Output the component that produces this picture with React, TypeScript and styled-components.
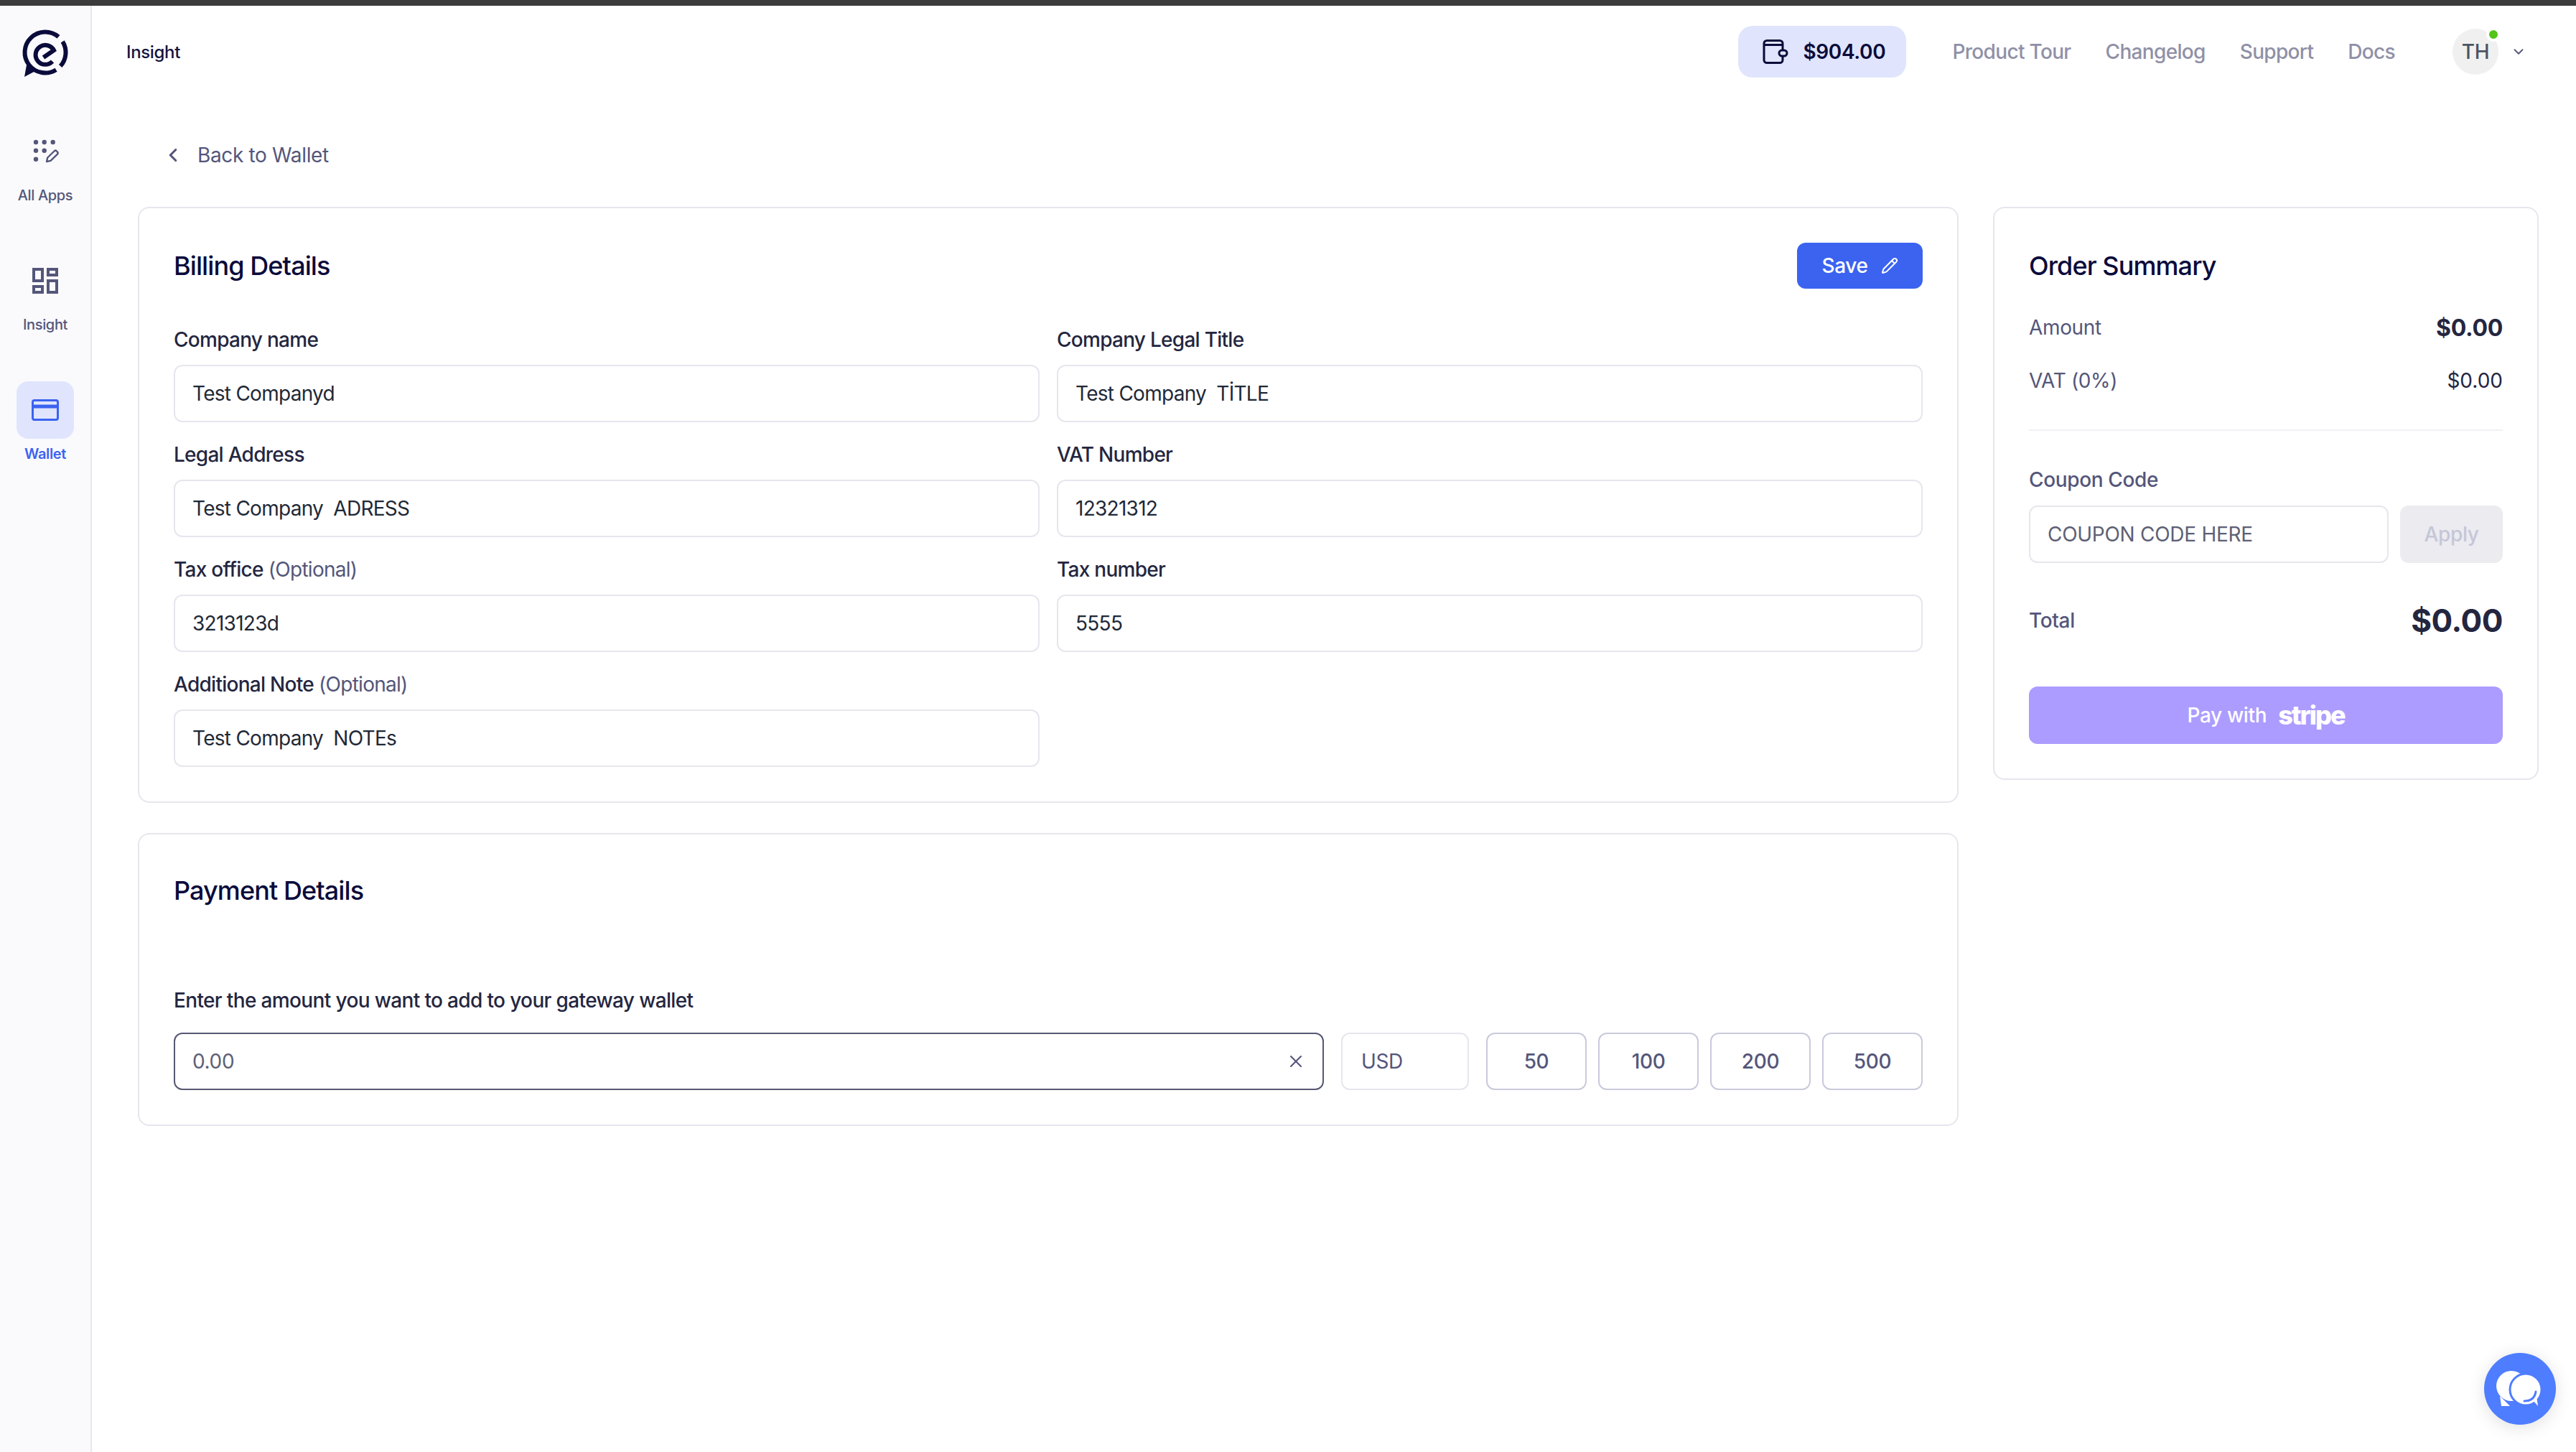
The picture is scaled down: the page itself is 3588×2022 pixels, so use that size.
import styled, { createGlobalStyle } from "styled-components";
import { ChevronDown, ChevronLeft, Pencil, X } from "lucide-react";

const GlobalStyle = createGlobalStyle`
  * {
    box-sizing: border-box;
  }
  html, body {
    margin: 0;
    padding: 0;
    background: #ffffff;
    font-family: "Inter", "Liberation Sans", sans-serif;
    letter-spacing: -0.022em;
    overflow: hidden;
  }
  input, button {
    font-family: inherit;
    letter-spacing: inherit;
  }
`;

const Page = styled.div`
  height: 100vh;
  display: flex;
  flex-direction: column;
  position: relative;
`;

const TopStrip = styled.div`
  height: 8px;
  flex: none;
  background: #3c3c3c;
`;

const Shell = styled.div`
  flex: 1;
  display: flex;
  min-height: 0;
`;

const Sidebar = styled.aside`
  width: 128px;
  flex: none;
  display: flex;
  flex-direction: column;
  align-items: center;
  gap: 65px;
  padding-top: 30px;
  background: #fafafd;
  border-right: 2px solid #e6e6ee;
`;

const Logo = styled.svg`
  width: 76px;
  height: 76px;
  margin-bottom: -8px;
`;

const NavItem = styled.div`
  display: flex;
  flex-direction: column;
  align-items: center;
  gap: 7px;
`;

const NavTile = styled.div<{ $active?: boolean }>`
  width: 80px;
  height: 80px;
  display: flex;
  align-items: center;
  justify-content: center;
  border-radius: 16px;
  background: ${(p) => (p.$active ? "#e0e5fd" : "transparent")};
  color: ${(p) => (p.$active ? "#3b63f0" : "#54567a")};
`;

const NavLabel = styled.span<{ $active?: boolean }>`
  font-size: 20px;
  line-height: 28px;
  font-weight: ${(p) => (p.$active ? 600 : 500)};
  color: ${(p) => (p.$active ? "#3b63f0" : "#54567a")};
`;

const Main = styled.main`
  flex: 1;
  min-width: 0;
  display: flex;
  flex-direction: column;
`;

const Header = styled.header`
  height: 128px;
  flex: none;
  display: flex;
  align-items: center;
  padding: 0 69px 0 48px;
`;

const AppName = styled.span`
  font-size: 24px;
  font-weight: 500;
  color: #14143f;
`;

const HeaderRight = styled.div`
  margin-left: auto;
  display: flex;
  align-items: center;
`;

const Balance = styled.div`
  width: 234px;
  height: 72px;
  display: flex;
  align-items: center;
  gap: 20px;
  padding-left: 34px;
  border-radius: 20px;
  background: #e0e5fd;
  font-size: 28px;
  font-weight: 600;
  color: #0b0b3b;
`;

const TopNav = styled.nav`
  display: flex;
  gap: 48px;
  margin-left: 64px;
`;

const TopLink = styled.a`
  font-size: 28px;
  font-weight: 500;
  letter-spacing: -0.024em;
  color: #8f90a6;
`;

const Avatar = styled.div`
  position: relative;
  width: 64px;
  height: 64px;
  margin-left: 80px;
  display: flex;
  align-items: center;
  justify-content: center;
  border-radius: 50%;
  background: #f0f0f0;
  font-size: 28px;
  font-weight: 500;
  color: #4b5563;
`;

const OnlineDot = styled.span`
  position: absolute;
  top: -2px;
  right: -3px;
  width: 20px;
  height: 20px;
  border-radius: 50%;
  background: #52c41a;
  border: 4px solid #ffffff;
`;

const UserCaret = styled(ChevronDown)`
  margin-left: 17px;
  color: #54567a;
`;

const Content = styled.div`
  flex: 1;
  padding: 52px 52px 0 64px;
`;

const BackLink = styled.a`
  height: 56px;
  margin-bottom: 44px;
  padding-left: 34px;
  display: flex;
  align-items: center;
  gap: 19px;
  font-size: 28px;
  color: #54567a;
`;

const Columns = styled.div`
  display: grid;
  grid-template-columns: 2536px 1fr;
  column-gap: 48px;
  align-items: start;
`;

const LeftColumn = styled.div`
  display: flex;
  flex-direction: column;
  gap: 42px;
`;

const Card = styled.section`
  padding: 48px;
  border: 2px solid #e6e6ee;
  border-radius: 16px;
  background: #ffffff;
`;

const CardHeader = styled.div`
  height: 64px;
  display: flex;
  align-items: center;
  justify-content: space-between;
`;

const CardTitle = styled.h2`
  margin: 0;
  font-size: 36px;
  line-height: 60px;
  font-weight: 500;
  letter-spacing: -0.025em;
  color: #0b0b3b;
`;

const SaveButton = styled.button`
  width: 175px;
  height: 64px;
  display: flex;
  align-items: center;
  justify-content: center;
  gap: 18px;
  border: none;
  border-radius: 12px;
  background: #3b63f0;
  color: #ffffff;
  font-size: 28px;
  font-weight: 500;
`;

const FormGrid = styled.div`
  margin-top: 51px;
  display: grid;
  grid-template-columns: 1fr 1fr;
  column-gap: 24px;
  row-gap: 25px;
`;

const Field = styled.div`
  display: flex;
  flex-direction: column;
  gap: 15px;
`;

const Label = styled.label`
  font-size: 28px;
  line-height: 40px;
  font-weight: 500;
  letter-spacing: -0.026em;
  color: #24263f;
`;

const Optional = styled.span`
  font-weight: 400;
  color: #54567a;
`;

const Input = styled.input`
  width: 100%;
  height: 80px;
  padding: 0 24px;
  border: 2px solid #e6e6ee;
  border-radius: 12px;
  background: #ffffff;
  font-size: 28px;
  letter-spacing: -0.026em;
  color: #1f2937;
  outline: none;

  &::placeholder {
    color: #5d6075;
    opacity: 1;
  }
`;

const CouponInput = styled(Input)`
  letter-spacing: -0.01em;
`;

const PaymentPrompt = styled.label`
  display: block;
  margin-top: 103px;
  margin-bottom: 25px;
  font-size: 28px;
  line-height: 40px;
  font-weight: 500;
  letter-spacing: -0.023em;
  color: #24263f;
`;

const AmountRow = styled.div`
  display: flex;
  gap: 24px;
`;

const AmountShell = styled.div`
  flex: 1;
  height: 80px;
  display: flex;
  align-items: center;
  padding: 0 23px 0 24px;
  border: 2px solid #565873;
  border-radius: 12px;
`;

const AmountInput = styled.input`
  flex: 1;
  min-width: 0;
  padding: 0;
  border: none;
  outline: none;
  background: transparent;
  font-size: 28px;
  color: #1f2937;

  &::placeholder {
    color: #5d6075;
    opacity: 1;
  }
`;

const ClearIcon = styled(X)`
  color: #54567a;
  flex: none;
`;

const Currency = styled.div`
  width: 178px;
  height: 80px;
  display: flex;
  align-items: center;
  padding-left: 26px;
  border: 2px solid #e6e6ee;
  border-radius: 12px;
  font-size: 28px;
  color: #54567a;
`;

const QuickGroup = styled.div`
  display: flex;
  gap: 16px;
`;

const QuickButton = styled.button`
  width: 140px;
  height: 80px;
  border: 2px solid #c9cadb;
  border-radius: 12px;
  background: #ffffff;
  font-size: 28px;
  font-weight: 500;
  color: #54567a;
`;

const SummaryRow = styled.div`
  height: 40px;
  margin-top: 34px;
  display: flex;
  align-items: center;
  justify-content: space-between;
  font-size: 28px;
  color: #54567a;
`;

const AmountValue = styled.span`
  font-size: 32px;
  font-weight: 700;
  letter-spacing: -0.01em;
  color: #24263f;
`;

const VatValue = styled.span`
  letter-spacing: 0;
  color: #24263f;
`;

const Divider = styled.hr`
  height: 2px;
  margin: 48px 0;
  border: none;
  background: #f0f0f5;
`;

const CouponLabel = styled.div`
  margin-bottom: 16px;
  font-size: 28px;
  line-height: 40px;
  font-weight: 500;
  color: #54567a;
`;

const CouponRow = styled.div`
  display: grid;
  grid-template-columns: 1fr 143px;
  column-gap: 16px;
`;

const ApplyButton = styled.button`
  height: 80px;
  border: none;
  border-radius: 12px;
  background: #ebebf0;
  font-size: 28px;
  font-weight: 500;
  color: #c5c6d8;
`;

const TotalRow = styled.div`
  height: 60px;
  margin-top: 50px;
  display: flex;
  align-items: center;
  justify-content: space-between;
  font-size: 28px;
  font-weight: 500;
  color: #54567a;
`;

const TotalValue = styled.span`
  font-size: 44px;
  font-weight: 700;
  letter-spacing: -0.01em;
  color: #24263f;
`;

const PayButton = styled.button`
  width: 100%;
  height: 80px;
  margin-top: 62px;
  display: flex;
  align-items: center;
  justify-content: center;
  gap: 16px;
  border: none;
  border-radius: 12px;
  background: #ac9cff;
  color: #ffffff;
  font-size: 28px;
  font-weight: 500;
`;

const StripeWord = styled.span`
  font-size: 36px;
  font-weight: 800;
  letter-spacing: -2px;
`;

const ChatBubble = styled.div`
  position: absolute;
  right: 28px;
  bottom: 38px;
  width: 100px;
  height: 100px;
  border-radius: 50%;
  background: #4f7dff;
  box-shadow: 0 4px 24px rgba(0, 0, 0, 0.12);
`;

const LogoMark = () => (
  <Logo viewBox="0 0 76 76" fill="none">
    <g stroke="#0b0b3b" strokeWidth="6">
      <path d="M56.5 13.3A28.5 28.5 0 1 0 53.1 59.2" />
      <path d="M62.2 19.9A28.5 28.5 0 0 1 59.2 54.1" />
      <path d="M35.5 42L50 32A13.5 13.5 0 1 0 48 47.5" />
    </g>
    <path d="M9 69L13 47L26 60Z" fill="#0b0b3b" />
  </Logo>
);

const AppsIcon = () => (
  <svg width="48" height="48" viewBox="0 0 48 48" fill="#54567a">
    <circle cx="11" cy="11" r="3.2" />
    <circle cx="22.7" cy="11" r="3.2" />
    <circle cx="34.7" cy="11" r="3.2" />
    <circle cx="11" cy="22.7" r="3.2" />
    <circle cx="22.7" cy="22.7" r="3.2" />
    <circle cx="11" cy="34.7" r="3.2" />
    <path
      d="M26 38l1.2-5.5L36.5 23.5a2.5 2.5 0 0 1 3.5 0l.8.8a2.5 2.5 0 0 1 0 3.5L31.5 36.8Z"
      fill="none"
      stroke="#54567a"
      strokeWidth="2.4"
      strokeLinejoin="round"
    />
  </svg>
);

const InsightIcon = () => (
  <svg width="36" height="36" viewBox="0 0 36 36" fill="none" stroke="currentColor" strokeWidth="4">
    <rect x="2" y="2" width="12" height="16" />
    <rect x="22" y="2" width="12" height="8" />
    <rect x="2" y="26" width="12" height="8" />
    <rect x="22" y="18" width="12" height="16" />
  </svg>
);

const CardIcon = () => (
  <svg width="38" height="30" viewBox="0 0 38 30" fill="none" stroke="currentColor" strokeWidth="3">
    <rect x="1.5" y="1.5" width="35" height="27" rx="2.5" />
    <path d="M1.5 10h35" strokeWidth="5" />
  </svg>
);

const WalletIcon = () => (
  <svg width="36" height="34" viewBox="0 0 36 34" fill="none" stroke="#0b0b3b" strokeWidth="3" strokeLinejoin="round">
    <path d="M28 15V5.500A4 4 0 0 0 24 1.500H6A4 4 0 0 0 2 5.500V28.500A4 4 0 0 0 6 32.500H24A4 4 0 0 0 28 28.500V23" />
    <path d="M2 7.500H28" />
    <rect x="23" y="15" width="11" height="8" rx="4" />
  </svg>
);

const ChatIcon = () => (
  <svg width="100" height="100" viewBox="0 0 100 100">
    <circle cx="38" cy="46" r="21" fill="#ffffff" />
    <path d="M22 60L24 74H36Z" fill="#ffffff" />
    <circle cx="58" cy="51" r="22" fill="#ffffff" stroke="#4f7dff" strokeWidth="3" />
    <path d="M68 66L75 74L73 60Z" fill="#ffffff" />
    <path d="M56 67Q70 67 72 54" fill="none" stroke="#4f7dff" strokeWidth="3" strokeLinecap="round" />
  </svg>
);

const billingFields = [
  { label: "Company name", value: "Test Companyd" },
  { label: "Company Legal Title", value: "Test Company  TİTLE" },
  { label: "Legal Address", value: "Test Company  ADRESS" },
  { label: "VAT Number", value: "12321312" },
  { label: "Tax office", optional: true, value: "3213123d" },
  { label: "Tax number", value: "5555" },
  { label: "Additional Note", optional: true, value: "Test Company  NOTEs" },
];

export default function App() {
  return (
    <Page>
      <GlobalStyle />
      <TopStrip />
      <Shell>
        <Sidebar>
          <LogoMark />
          <NavItem>
            <NavTile>
              <AppsIcon />
            </NavTile>
            <NavLabel>All Apps</NavLabel>
          </NavItem>
          <NavItem>
            <NavTile>
              <InsightIcon />
            </NavTile>
            <NavLabel>Insight</NavLabel>
          </NavItem>
          <NavItem>
            <NavTile $active>
              <CardIcon />
            </NavTile>
            <NavLabel $active>Wallet</NavLabel>
          </NavItem>
        </Sidebar>
        <Main>
          <Header>
            <AppName>Insight</AppName>
            <HeaderRight>
              <Balance>
                <WalletIcon />
                $904.00
              </Balance>
              <TopNav>
                <TopLink>Product Tour</TopLink>
                <TopLink>Changelog</TopLink>
                <TopLink>Support</TopLink>
                <TopLink>Docs</TopLink>
              </TopNav>
              <Avatar>
                TH
                <OnlineDot />
              </Avatar>
              <UserCaret size={22} />
            </HeaderRight>
          </Header>
          <Content>
            <BackLink>
              <ChevronLeft size={30} strokeWidth={2.5} />
              Back to Wallet
            </BackLink>
            <Columns>
              <LeftColumn>
                <Card>
                  <CardHeader>
                    <CardTitle>Billing Details</CardTitle>
                    <SaveButton>
                      Save
                      <Pencil size={24} />
                    </SaveButton>
                  </CardHeader>
                  <FormGrid>
                    {billingFields.map((field) => (
                      <Field key={field.label}>
                        <Label>
                          {field.label}
                          {field.optional && <Optional> (Optional)</Optional>}
                        </Label>
                        <Input defaultValue={field.value} />
                      </Field>
                    ))}
                  </FormGrid>
                </Card>
                <Card>
                  <CardTitle>Payment Details</CardTitle>
                  <PaymentPrompt>Enter the amount you want to add to your gateway wallet</PaymentPrompt>
                  <AmountRow>
                    <AmountShell>
                      <AmountInput placeholder="0.00" />
                      <ClearIcon size={28} strokeWidth={1.8} />
                    </AmountShell>
                    <Currency>USD</Currency>
                    <QuickGroup>
                      {[50, 100, 200, 500].map((n) => (
                        <QuickButton key={n}>{n}</QuickButton>
                      ))}
                    </QuickGroup>
                  </AmountRow>
                </Card>
              </LeftColumn>
              <Card>
                <CardHeader>
                  <CardTitle>Order Summary</CardTitle>
                </CardHeader>
                <SummaryRow>
                  Amount
                  <AmountValue>$0.00</AmountValue>
                </SummaryRow>
                <SummaryRow>
                  VAT (0%)
                  <VatValue>$0.00</VatValue>
                </SummaryRow>
                <Divider />
                <CouponLabel>Coupon Code</CouponLabel>
                <CouponRow>
                  <CouponInput placeholder="COUPON CODE HERE" />
                  <ApplyButton>Apply</ApplyButton>
                </CouponRow>
                <TotalRow>
                  Total
                  <TotalValue>$0.00</TotalValue>
                </TotalRow>
                <PayButton>
                  Pay with
                  <StripeWord>stripe</StripeWord>
                </PayButton>
              </Card>
            </Columns>
          </Content>
        </Main>
      </Shell>
      <ChatBubble>
        <ChatIcon />
      </ChatBubble>
    </Page>
  );
}
